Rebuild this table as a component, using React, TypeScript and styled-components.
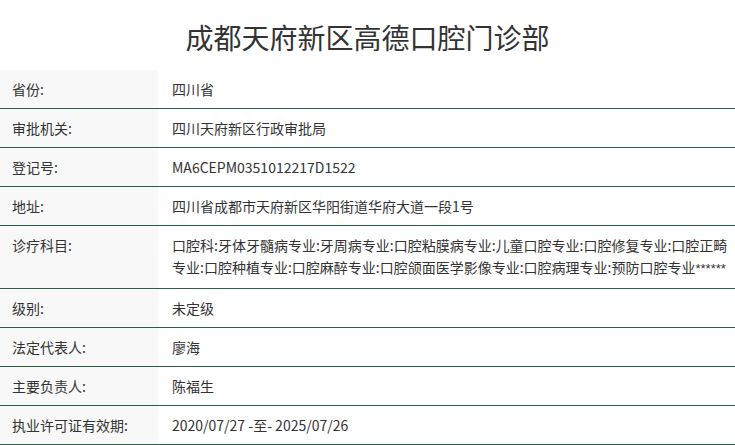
import React from "react";
import styled, { createGlobalStyle } from "styled-components";

const Global = createGlobalStyle`
  html, body { margin: 0; padding: 0; background: #fff; }
  body { font-family: "Noto Sans CJK SC", sans-serif; color: #333; }
`;

const Page = styled.div`
  width: 735px;
`;

const Title = styled.h1`
  margin: 0;
  height: 70px;
  display: flex;
  align-items: center;
  justify-content: center;
  font-family: "Noto Sans CJK SC", sans-serif;
  font-weight: 400;
  font-size: 28px;
  color: #333;
  padding-top: 4px;
  box-sizing: border-box;
`;

const Table = styled.div`
  display: flex;
  flex-direction: column;
`;

const Row = styled.div`
  display: grid;
  grid-template-columns: 158px 1fr;
  border-bottom: 1px solid #2c5e47;
`;

const Label = styled.div`
  background: #f8f8f8;
  padding: 8px 12px;
  font-size: 14px;
  line-height: 22px;
  font-family: "Noto Sans CJK SC", sans-serif;
`;

const Value = styled.div`
  padding: 8px 2px 8px 14px;
  font-size: 14px;
  line-height: 22px;
  font-family: "Noto Sans CJK SC", sans-serif;
`;

const Mask = styled.span`
  font-family: "Liberation Sans", Arial, sans-serif;
  font-size: 13px;
`;

type Item = { label: string; value: string; mask?: string };

const rows: Item[] = [
  { label: "省份:", value: "四川省" },
  { label: "审批机关:", value: "四川天府新区行政审批局" },
  { label: "登记号:", value: "MA6CEPM0351012217D1522" },
  { label: "地址:", value: "四川省成都市天府新区华阳街道华府大道一段1号" },
  {
    label: "诊疗科目:",
    value:
      "口腔科:牙体牙髓病专业:牙周病专业:口腔粘膜病专业:儿童口腔专业:口腔修复专业:口腔正畸专业:口腔种植专业:口腔麻醉专业:口腔颌面医学影像专业:口腔病理专业:预防口腔专业",
    mask: "******",
  },
  { label: "级别:", value: "未定级" },
  { label: "法定代表人:", value: "廖海" },
  { label: "主要负责人:", value: "陈福生" },
  { label: "执业许可证有效期:", value: "2020/07/27 -至- 2025/07/26" },
];

export default function App() {
  return (
    <Page>
      <Global />
      <Title>成都天府新区高德口腔门诊部</Title>
      <Table>
        {rows.map((r) => (
          <Row key={r.label}>
            <Label>{r.label}</Label>
            <Value>
              {r.value}
              {r.mask && <Mask>{r.mask}</Mask>}
            </Value>
          </Row>
        ))}
      </Table>
    </Page>
  );
}
